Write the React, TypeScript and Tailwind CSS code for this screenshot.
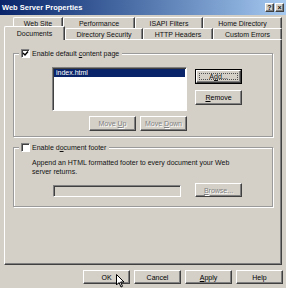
import React from 'react';

const raised =
  'border border-t-white border-l-white border-r-[#404040] border-b-[#404040] shadow-[inset_-1px_-1px_0_#808080]';
const sunken =
  'border border-t-[#808080] border-l-[#808080] border-r-white border-b-white shadow-[inset_1px_1px_0_#404040]';
const etched = 'border border-[#9a9a9a] shadow-[inset_1px_1px_0_#fff,1px_1px_0_#fff]';

interface BtnProps {
  children: React.ReactNode;
  disabled?: boolean;
  focus?: boolean;
  className?: string;
}

const Btn: React.FC<BtnProps> = ({ children, disabled, focus, className = '' }) => {
  if (focus) {
    return (
      <div className={`border border-black flex ${className}`}>
        <div className={`flex-1 flex bg-[#d4d0c8] ${raised} p-[2px]`}>
          <div className="flex-1 flex items-center justify-center border border-dotted border-[#505050]">{children}</div>
        </div>
      </div>
    );
  }
  return (
    <div
      className={`flex items-center justify-center bg-[#d4d0c8] ${raised} ${
        disabled ? 'text-[#808080] [text-shadow:1px_1px_0_#fff]' : 'text-black'
      } ${className}`}
    >
      {children}
    </div>
  );
};

const CheckBox: React.FC<{ checked?: boolean }> = ({ checked }) => (
  <div className={`w-[9px] h-[9px] bg-white flex items-center justify-center ${sunken}`}>
    {checked && (
      <svg width="7" height="7" viewBox="0 0 7 7">
        <path d="M1 3 L3 5 L6 1.5" stroke="#000" strokeWidth="1.4" fill="none" />
      </svg>
    )}
  </div>
);

const Tab: React.FC<{ label: string; w: string; selected?: boolean }> = ({ label, w, selected }) => (
  <div
    className={`${w} flex items-center justify-center bg-[#d4d0c8] border-t border-l border-r border-t-white border-l-white border-r-[#404040] rounded-tl-[2px] shadow-[inset_-1px_0_0_#808080] ${
      selected ? 'h-[14px] mb-[-1px] relative z-10' : 'h-[11px]'
    }`}
  >
    {label}
  </div>
);

export default function App() {
  return (
    <div
      className="relative w-[286px] h-[288px] bg-[#d4d0c8] flex flex-col text-[7px] leading-[9px] text-[#111] select-none"
      style={{ fontFamily: '"Liberation Sans", Arial, sans-serif' }}
    >
      {/* Title bar */}
      <div className="h-[15px] bg-gradient-to-r from-[#0a246a] to-[#a6caf0] flex items-center justify-between pl-[2px] pr-[2px]">
        <span className="text-white font-bold text-[7.5px]">Web Server Properties</span>
        <div className="flex gap-[1px]">
          <div className={`w-[9px] h-[9px] bg-[#d4d0c8] ${raised} flex items-center justify-center font-bold text-[7px] leading-none`}>?</div>
          <div className={`w-[9px] h-[9px] bg-[#d4d0c8] ${raised} flex items-center justify-center font-bold text-[7px] leading-none`}>×</div>
        </div>
      </div>

      {/* Tabs */}
      <div className="mt-[2px] flex flex-col">
        <div className="flex ml-[13px] h-[11px]">
          <Tab label="Web Site" w="w-[50px]" />
          <Tab label="Performance" w="w-[72px]" />
          <Tab label="ISAPI Filters" w="w-[68px]" />
          <Tab label="Home Directory" w="w-[79px]" />
        </div>
        <div className="flex ml-[4px] h-[11px] items-end">
          <Tab label="Documents" w="w-[61px]" selected />
          <Tab label="Directory Security" w="w-[78px]" />
          <Tab label="HTTP Headers" w="w-[70px]" />
          <Tab label="Custom Errors" w="w-[69px]" />
        </div>
      </div>

      {/* Panel */}
      <div className={`ml-[4px] w-[278px] h-[226px] ${raised} px-[8px] pt-[13px]`}>
        {/* Group 1 */}
        <div className={`relative h-[84px] ${etched} pl-[38px] pt-[13px] flex`}>
          <div className="absolute top-[-6px] left-[5px] flex items-center gap-[2px] bg-[#d4d0c8] pl-[2px] pr-[3px] h-[10px]">
            <CheckBox checked />
            <span>
              Enable default <u>c</u>ontent page
            </span>
          </div>
          <div className="flex flex-col">
            <div className={`w-[135px] h-[44px] bg-white ${sunken} p-[1px]`}>
              <div className="bg-[#0a246a] text-white h-[8px] leading-[8px] pl-[2px]">index.html</div>
            </div>
            <div className="flex justify-end gap-[4px] mt-[5px]">
              <Btn disabled className="w-[47px] h-[15px]">
                <span>
                  Move <u>U</u>p
                </span>
              </Btn>
              <Btn disabled className="w-[47px] h-[15px]">
                <span>
                  Move <u>D</u>own
                </span>
              </Btn>
            </div>
          </div>
          <div className="flex flex-col ml-[8px] mt-[2px] gap-[6px]">
            <Btn focus className="w-[47px] h-[15px]">
              <span>
                A<u>d</u>d...
              </span>
            </Btn>
            <Btn className="w-[47px] h-[15px]">
              <span>
                <u>R</u>emove
              </span>
            </Btn>
          </div>
        </div>

        {/* Group 2 */}
        <div className={`relative mt-[10px] h-[60px] ${etched} pt-[10px] pl-[18px]`}>
          <div className="absolute top-[-6px] left-[5px] flex items-center gap-[2px] bg-[#d4d0c8] pl-[2px] pr-[3px] h-[10px]">
            <CheckBox />
            <span>
              Enable d<u>o</u>cument footer
            </span>
          </div>
          <div>
            Append an HTML formatted footer to every document your Web
            <br />
            server returns.
          </div>
          <div className="flex items-end mt-[7px] ml-[21px]">
            <div className={`w-[128px] h-[12px] bg-[#d4d0c8] ${sunken}`} />
            <Btn disabled className="w-[47px] h-[14px] ml-[14px]">
              <span>
                <u>B</u>rowse...
              </span>
            </Btn>
          </div>
        </div>
      </div>

      {/* Bottom buttons */}
      <div className="flex justify-end gap-[4px] pr-[3px] mt-[5px]">
        <Btn className="w-[47px] h-[14px]">OK</Btn>
        <Btn className="w-[47px] h-[14px]">Cancel</Btn>
        <Btn className="w-[47px] h-[14px]">
          <span>
            <u>A</u>pply
          </span>
        </Btn>
        <Btn className="w-[47px] h-[14px]">Help</Btn>
      </div>

      {/* Mouse cursor */}
      <svg className="absolute left-[116px] top-[274px]" width="9" height="14" viewBox="0 0 9 14">
        <path d="M0.5 0.5 L0.5 11 L3 8.5 L5 13 L6.5 12.3 L4.6 8 L8 8 Z" fill="#fff" stroke="#000" strokeWidth="1" />
      </svg>
    </div>
  );
}
